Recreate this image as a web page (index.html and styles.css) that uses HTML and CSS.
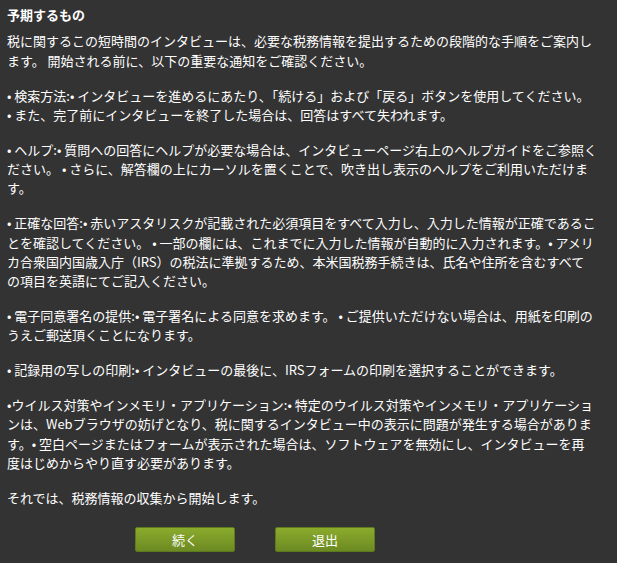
FILE: index.html
```html
<!DOCTYPE html>
<html lang="ja">
<head>
    <meta charset="UTF-8">
    <meta name="viewport" content="width=device-width, initial-scale=1.0">
    <title>予期するもの</title>
    <link rel="stylesheet" href="styles.css">
</head>
<body>
<div class="intro">
    <h1 class="intro-title">予期するもの</h1>
    <p>税に関するこの短時間のインタビューは、必要な税務情報を提出するための段階的な手順をご案内し<br>ます。 開始される前に、以下の重要な通知をご確認ください。</p>
    <p>• 検索方法:• インタビューを進めるにあたり、「続ける」および「戻る」ボタンを使用してください。<br>• また、完了前にインタビューを終了した場合は、回答はすべて失われます。</p>
    <p>• ヘルプ:• 質問への回答にヘルプが必要な場合は、インタビューページ右上のヘルプガイドをご参照く<br>ださい。 • さらに、解答欄の上にカーソルを置くことで、吹き出し表示のヘルプをご利用いただけま<br>す。</p>
    <p>• 正確な回答:• 赤いアスタリスクが記載された必須項目をすべて入力し、入力した情報が正確であるこ<br>とを確認してください。 • 一部の欄には、これまでに入力した情報が自動的に入力されます。• アメリ<br>カ合衆国内国歳入庁（IRS）の税法に準拠するため、本米国税務手続きは、氏名や住所を含むすべて<br>の項目を英語にてご記入ください。</p>
    <p>• 電子同意署名の提供:• 電子署名による同意を求めます。 • ご提供いただけない場合は、用紙を印刷の<br>うえご郵送頂くことになります。</p>
    <p>• 記録用の写しの印刷:• インタビューの最後に、IRSフォームの印刷を選択することができます。</p>
    <p>•ウイルス対策やインメモリ・アプリケーション:• 特定のウイルス対策やインメモリ・アプリケーショ<br>ンは、Webブラウザの妨げとなり、税に関するインタビュー中の表示に問題が発生する場合がありま<br>す。• 空白ページまたはフォームが表示された場合は、ソフトウェアを無効にし、インタビューを再<br>度はじめからやり直す必要があります。</p>
    <p>それでは、税務情報の収集から開始します。</p>

    <div class="actions">
        <button class="btn" id="continue">続く</button>
        <button class="btn" id="quit">退出</button>
    </div>
</div>
</body>
</html>
```

FILE: styles.css
```css
html, body {
    margin: 0;
    padding: 0;
    background: #333333;
}

body {
    color: #ffffff;
    font-family: "Noto Sans CJK JP", "Noto Sans", sans-serif;
    font-size: 13px;
    line-height: 19.4px;
}

.intro {
    padding: 5px 7px 0 7px;
}

.intro-title {
    font-size: 13px;
    font-weight: bold;
    margin: 0 0 7px 0;
}

.intro p {
    margin: 0 0 15.3px 0;
    white-space: nowrap;
}

.actions {
    display: flex;
    gap: 40px;
    margin-left: 128px;
    padding-top: 4px;
}

.btn {
    width: 100px;
    height: 25px;
    padding: 0;
    border: 1px solid #5d7a1c;
    border-radius: 2px;
    background: linear-gradient(#8bab2d, #6c8a22);
    color: #ffffff;
    font-family: "Noto Sans CJK JP", sans-serif;
    font-size: 13px;
    cursor: pointer;
}

.btn:hover {
    background: linear-gradient(#96b636, #76952a);
}
```
